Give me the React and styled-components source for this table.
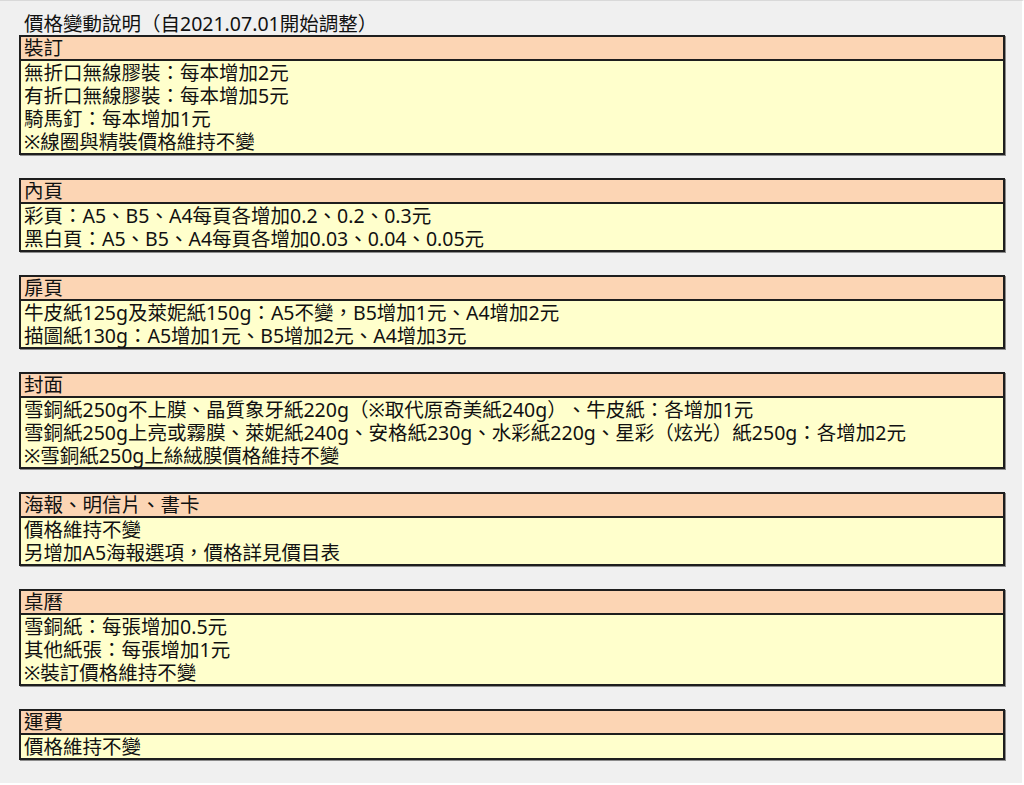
import React from 'react';
import styled, { createGlobalStyle } from 'styled-components';

const sections = [
  {
    title: '裝訂',
    rows: [
      '無折口無線膠裝：每本增加2元',
      '有折口無線膠裝：每本增加5元',
      '騎馬釘：每本增加1元',
      '※線圈與精裝價格維持不變',
    ],
  },
  {
    title: '內頁',
    rows: [
      '彩頁：A5、B5、A4每頁各增加0.2、0.2、0.3元',
      '黑白頁：A5、B5、A4每頁各增加0.03、0.04、0.05元',
    ],
  },
  {
    title: '扉頁',
    rows: [
      '牛皮紙125g及萊妮紙150g：A5不變，B5增加1元、A4增加2元',
      '描圖紙130g：A5增加1元、B5增加2元、A4增加3元',
    ],
  },
  {
    title: '封面',
    rows: [
      '雪銅紙250g不上膜、晶質象牙紙220g（※取代原奇美紙240g）、牛皮紙：各增加1元',
      '雪銅紙250g上亮或霧膜、萊妮紙240g、安格紙230g、水彩紙220g、星彩（炫光）紙250g：各增加2元',
      '※雪銅紙250g上絲絨膜價格維持不變',
    ],
  },
  {
    title: '海報、明信片、書卡',
    rows: ['價格維持不變', '另增加A5海報選項，價格詳見價目表'],
  },
  {
    title: '桌曆',
    rows: ['雪銅紙：每張增加0.5元', '其他紙張：每張增加1元', '※裝訂價格維持不變'],
  },
  {
    title: '運費',
    rows: ['價格維持不變'],
  },
];

const App = () => {
  return (
    <>
      <GlobalStyle />
      <Page>
        <Title>價格變動說明（自2021.07.01開始調整）</Title>
        {sections.map((s) => (
          <Section key={s.title}>
            <Header>{s.title}</Header>
            {s.rows.map((r) => (
              <Row key={r}>{r}</Row>
            ))}
          </Section>
        ))}
      </Page>
    </>
  );
};

export default App;

/* ===== STYLED COMPONENTS ===== */

const GlobalStyle = createGlobalStyle`
  html, body {
    margin: 0;
    padding: 0;
    background: #f0f0f0;
  }
  * { box-sizing: border-box; }
`;

const Page = styled.div`
  height: 785px;
  padding: 11px 19px 0 19px;
  border-top: 1px solid #d9d9d9;
  border-right: 2px solid #ffffff;
  border-bottom: 2px solid #ffffff;
  font-family: "Noto Sans", "Noto Sans CJK TC", sans-serif;
  font-size: 19.5px;
  color: #111;
  text-spacing-trim: space-all;
  overflow: hidden;
`;

const Title = styled.div`
  line-height: 23px;
  padding-left: 5px;
`;

const Section = styled.div`
  border: 2px solid #1e1e1e;
  box-shadow: 1px 1px 0 #8c8c8c;
  margin-bottom: 23px;
  width: 986px;
`;

const Header = styled.div`
  background: #fcd5b4;
  line-height: 22px;
  padding-left: 3px;
  border-bottom: 2px solid #1e1e1e;
`;

const Row = styled.div`
  background: #ffffcc;
  line-height: 23px;
  padding-left: 3px;
  white-space: nowrap;
`;
